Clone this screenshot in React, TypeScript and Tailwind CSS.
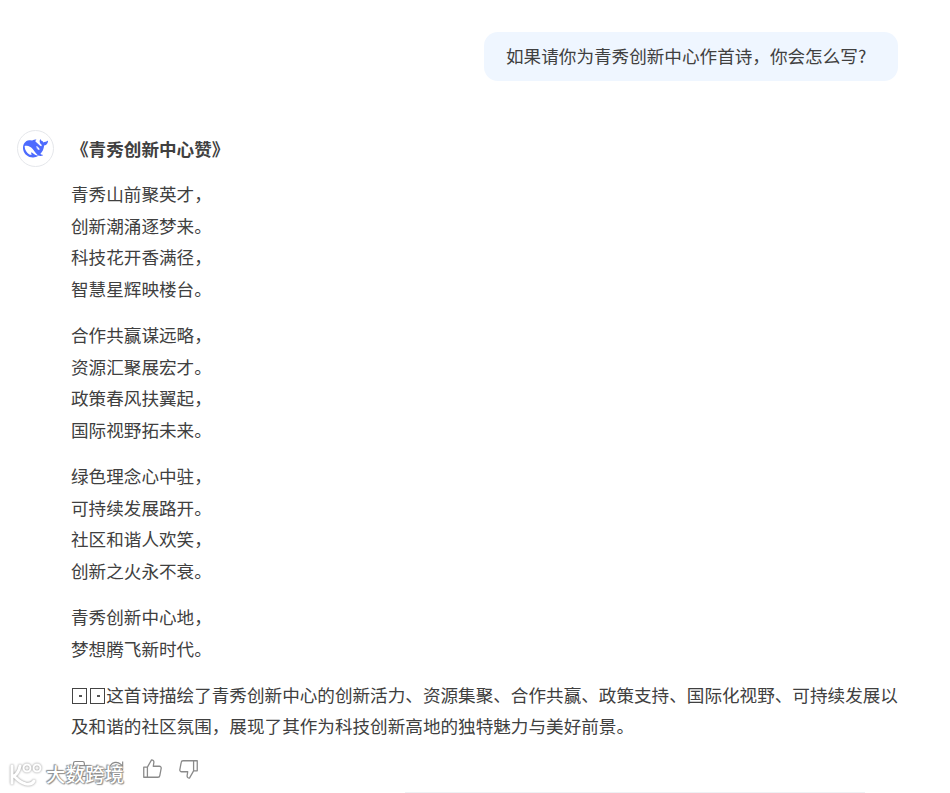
import React from "react";

const stanzas = [
  ["青秀山前聚英才，", "创新潮涌逐梦来。", "科技花开香满径，", "智慧星辉映楼台。"],
  ["合作共赢谋远略，", "资源汇聚展宏才。", "政策春风扶翼起，", "国际视野拓未来。"],
  ["绿色理念心中驻，", "可持续发展路开。", "社区和谐人欢笑，", "创新之火永不衰。"],
  ["青秀创新中心地，", "梦想腾飞新时代。"],
];

function Tofu() {
  return (
    <span className="inline-flex w-[17.6px] h-[17.6px] align-[-2px] items-center justify-center">
      <span className="relative block w-[15px] h-[16px] border border-[#444]">
        <span className="absolute left-[6px] top-[6px] w-[3px] h-[2px] bg-[#555]" />
      </span>
    </span>
  );
}

function Whale() {
  return (
    <svg viewBox="0 0 24 24" className="w-[25px] h-[25px]" fill="#4d6bfe">
      <path d="M23.748 4.482c-.254-.124-.364.113-.512.234-.051.039-.094.09-.137.136-.372.397-.806.657-1.373.626-.829-.046-1.537.214-2.163.848-.133-.782-.575-1.248-1.247-1.548-.352-.156-.708-.311-.955-.65-.172-.241-.219-.51-.305-.774-.055-.16-.11-.323-.293-.35-.2-.031-.278.136-.356.276-.313.572-.434 1.202-.422 1.84.027 1.436.633 2.58 1.838 3.393.137.093.172.187.129.323-.082.28-.18.552-.266.833-.055.179-.137.217-.329.14a5.526 5.526 0 01-1.736-1.18c-.857-.828-1.631-1.742-2.597-2.458a11.365 11.365 0 00-.689-.471c-.985-.957.13-1.743.388-1.836.27-.098.093-.432-.779-.428-.872.004-1.67.295-2.687.684a3.055 3.055 0 01-.465.137 9.597 9.597 0 00-2.883-.102c-1.885.21-3.39 1.102-4.497 2.623C.082 8.606-.231 10.684.152 12.85c.403 2.284 1.569 4.175 3.36 5.653 1.858 1.533 3.997 2.284 6.438 2.14 1.482-.085 3.133-.284 4.994-1.86.47.234.962.327 1.78.397.63.059 1.236-.03 1.705-.128.735-.156.684-.837.419-.961-2.155-1.004-1.682-.595-2.113-.926 1.096-1.296 2.746-2.642 3.392-7.003.05-.347.007-.565 0-.845-.004-.17.035-.237.23-.256a4.173 4.173 0 001.545-.475c1.396-.763 1.96-2.015 2.093-3.517.02-.23-.004-.467-.247-.588zM11.581 18c-2.089-1.642-3.102-2.183-3.52-2.16-.392.024-.321.471-.235.763.09.288.207.486.371.739.114.167.192.416-.113.603-.673.416-1.842-.14-1.897-.167-1.361-.802-2.5-1.86-3.301-3.307-.774-1.393-1.224-2.887-1.298-4.482-.02-.386.093-.522.477-.592a4.696 4.696 0 011.529-.039c2.132.312 3.946 1.265 5.468 2.774.868.86 1.525 1.887 2.202 2.891.72 1.066 1.494 2.082 2.48 2.914.348.292.625.514.891.677-.802.09-2.14.11-3.054-.614zm1-6.44a.306.306 0 01.415-.287.302.302 0 01.2.288.306.306 0 01-.31.307.303.303 0 01-.304-.308zm3.11 1.596c-.2.081-.399.151-.59.16a1.245 1.245 0 01-.798-.254c-.274-.23-.47-.358-.552-.758a1.73 1.73 0 01.016-.588c.07-.327-.008-.537-.239-.727-.187-.156-.426-.199-.688-.199a.559.559 0 01-.254-.078c-.11-.054-.2-.19-.114-.358.028-.054.16-.186.192-.21.356-.202.767-.136 1.146.016.352.144.618.408 1.001.782.391.451.462.576.685.914.176.265.336.537.445.848.067.195-.019.354-.25.452z" />
    </svg>
  );
}

export default function App() {
  return (
    <div
      className="relative w-[950px] h-[793px] overflow-hidden bg-white text-[17.6px] leading-[31.6px] text-[#404040] [text-spacing-trim:space-all]"
      style={{ fontFamily: '"Noto Sans CJK SC", "Noto Sans", sans-serif' }}
    >
      <div className="flex justify-end pt-[32px] pr-[52px]">
        <div className="rounded-[14px] bg-[#eff6ff] pl-[22px] pr-[30px] w-[414px] h-[49px] flex items-center whitespace-nowrap pb-[1px]">
          如果请你为青秀创新中心作首诗，你会怎么写?
        </div>
      </div>

      <div className="flex mt-[49px] pl-[17px]">
        <div className="w-[37px] h-[37px] shrink-0 rounded-full border border-[#e5e7eb] flex items-center justify-center">
          <Whale />
        </div>
        <div className="ml-[17px] w-[829px]">
          <div className="font-bold h-[37px] flex items-center">《青秀创新中心赞》</div>
          <div className="mt-[11px]">
            {stanzas.map((s, i) => (
              <p key={i} className="mb-[14.6px]">
                {s.map((l) => (
                  <span key={l} className="block">{l}</span>
                ))}
              </p>
            ))}
            <p>
              <Tofu />
              <Tofu />
              这首诗描绘了青秀创新中心的创新活力、资源集聚、合作共赢、政策支持、国际化视野、可持续发展以及和谐的社区氛围，展现了其作为科技创新高地的独特魅力与美好前景。
            </p>
          </div>
          <div className="flex items-center gap-[15px] mt-[16.5px] text-[#8a8a8a]">
            <svg viewBox="0 0 24 24" className="w-[20px] h-[20px]" fill="none" stroke="currentColor" strokeWidth="1.4">
              <rect x="8" y="8" width="13" height="13" rx="2.5" />
              <path d="M16 8V5a2 2 0 0 0-2-2H5a2 2 0 0 0-2 2v9a2 2 0 0 0 2 2h3" />
            </svg>
            <svg viewBox="0 0 24 24" className="w-[20px] h-[20px]" fill="none" stroke="currentColor" strokeWidth="1.4">
              <path d="M20 12a8 8 0 1 1-2.5-5.8L20 8.5" />
              <path d="M20 3v5.5h-5.5" />
            </svg>
            <svg viewBox="0 0 24 24" className="w-[22px] h-[22px]" fill="none" stroke="currentColor" strokeWidth="1.4" strokeLinejoin="round">
              <path d="M7 10v11H3V10h4zM7 10l4.500-8c1.800 0 2.800 1.300 2.500 3l-.6 4H20a2 2 0 0 1 2 2.400l-1.500 7.800a2 2 0 0 1-2 1.800H7" />
            </svg>
            <svg viewBox="0 0 24 24" className="w-[22px] h-[22px]" fill="none" stroke="currentColor" strokeWidth="1.4" strokeLinejoin="round">
              <path d="M17 14V3h4v11h-4zM17 14l-4.500 8c-1.800 0-2.800-1.300-2.500-3l.6-4H4a2 2 0 0 1-2-2.400l1.500-7.800A2 2 0 0 1 5.500 3H17" />
            </svg>
          </div>
        </div>
      </div>

      <div className="absolute left-[405px] right-[85px] bottom-0 h-px bg-[#eef1f4]" />

      <div className="absolute left-[8px] top-[760px] flex items-center gap-[2px]">
        <svg viewBox="0 0 36 28" className="w-[36px] h-[28px] overflow-visible" fill="none" strokeLinecap="round" style={{ filter: "drop-shadow(0 0 1px #8a8a8a)" }}>
          <path d="M4 6v17M12 6c-1 5-3 8-6 10 3 3 6 7 12 8 4 .5 7-1 8-3" stroke="#fff" strokeWidth="3" />
          <circle cx="19" cy="8" r="3.5" stroke="#fff" strokeWidth="2" />
          <circle cx="29" cy="8" r="3.5" stroke="#fff" strokeWidth="2" />
        </svg>
        <span
          className="text-[19.5px] leading-[28px] text-white font-medium"
          style={{ textShadow: "0 0 1px #777, 0 0 2px #888, 1px 1px 1px #999, -1px -1px 1px #999" }}
        >
          大数跨境
        </span>
      </div>
    </div>
  );
}
